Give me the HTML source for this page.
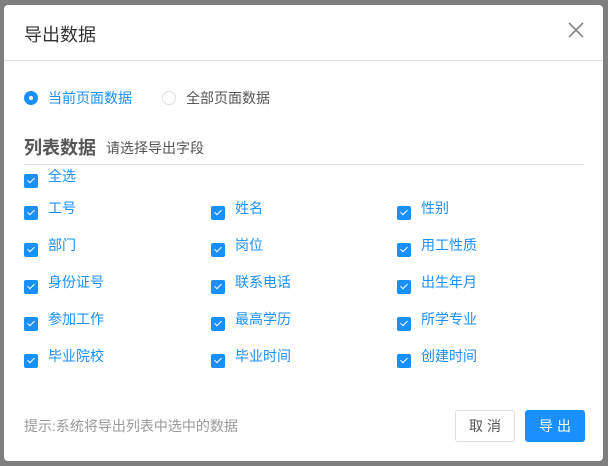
<!DOCTYPE html>
<html><head><meta charset="utf-8"><style>
*{margin:0;padding:0;box-sizing:border-box}
body{width:608px;height:466px;background:#7f7f7f;font-family:"Liberation Sans","Noto Sans CJK SC",sans-serif;position:relative;overflow:hidden}
.m{position:absolute;left:4px;top:5px;width:599px;height:456px;background:#fff;border-radius:4px}
.t{position:absolute;left:20px;top:16px;font-size:18px;color:#333}
.x{position:absolute;left:560px;top:13px;width:24px;height:24px}
.hl{position:absolute;left:0;right:0;top:55px;height:1px;background:#dcdfe6}
.a{position:absolute;font-size:14px;white-space:nowrap;line-height:16px}
.r{position:absolute;width:14px;height:14px;border-radius:50%}
.cb{position:absolute;width:14px;height:14px;background:#1890ff;border-radius:2px}
.cb:after{content:"";position:absolute;left:4.5px;top:2px;width:3px;height:6px;border:solid #fff;border-width:0 1.5px 1.5px 0;transform:rotate(45deg)}
.lb{position:absolute;font-size:14px;color:#1890ff;line-height:16px}
.btn{position:absolute;top:405px;height:32px;width:60px;border-radius:3px;font-size:14px;text-align:center;line-height:30px;letter-spacing:4px;padding-left:4px}
</style></head><body>
<div class="m">
<div class="t">导出数据</div>
<svg class="x" viewBox="0 0 24 24"><path d="M5 5L19 19M19 5L5 19" stroke="#888" stroke-width="1.6"/></svg>
<div class="hl"></div>
<div class="r" style="left:20px;top:86px;background:#1890ff"><div style="position:absolute;left:5px;top:5px;width:4px;height:4px;border-radius:50%;background:#fff"></div></div>
<div class="a" style="left:44px;top:85px;color:#1890ff">当前页面数据</div>
<div class="r" style="left:158px;top:86px;border:1px solid #dcdfe6"></div>
<div class="a" style="left:182px;top:85px;color:#555">全部页面数据</div>
<div class="a" style="left:20px;top:133px;font-size:18px;font-weight:bold;color:#555;line-height:20px">列表数据</div>
<div class="a" style="left:102px;top:135px;color:#555">请选择导出字段</div>
<div style="position:absolute;left:20px;top:159px;width:560px;height:1px;background:#dcdfe6"></div>
<div class="cb" style="left:20px;top:169px"></div><div class="lb" style="left:44px;top:163px">全选</div>

<div class="cb" style="left:20px;top:201px"></div><div class="lb" style="left:44px;top:195px">工号</div>
<div class="cb" style="left:207px;top:201px"></div><div class="lb" style="left:231px;top:195px">姓名</div>
<div class="cb" style="left:393px;top:201px"></div><div class="lb" style="left:417px;top:195px">性别</div>

<div class="cb" style="left:20px;top:238px"></div><div class="lb" style="left:44px;top:232px">部门</div>
<div class="cb" style="left:207px;top:238px"></div><div class="lb" style="left:231px;top:232px">岗位</div>
<div class="cb" style="left:393px;top:238px"></div><div class="lb" style="left:417px;top:232px">用工性质</div>

<div class="cb" style="left:20px;top:275px"></div><div class="lb" style="left:44px;top:269px">身份证号</div>
<div class="cb" style="left:207px;top:275px"></div><div class="lb" style="left:231px;top:269px">联系电话</div>
<div class="cb" style="left:393px;top:275px"></div><div class="lb" style="left:417px;top:269px">出生年月</div>

<div class="cb" style="left:20px;top:312px"></div><div class="lb" style="left:44px;top:306px">参加工作</div>
<div class="cb" style="left:207px;top:312px"></div><div class="lb" style="left:231px;top:306px">最高学历</div>
<div class="cb" style="left:393px;top:312px"></div><div class="lb" style="left:417px;top:306px">所学专业</div>

<div class="cb" style="left:20px;top:349px"></div><div class="lb" style="left:44px;top:343px">毕业院校</div>
<div class="cb" style="left:207px;top:349px"></div><div class="lb" style="left:231px;top:343px">毕业时间</div>
<div class="cb" style="left:393px;top:349px"></div><div class="lb" style="left:417px;top:343px">创建时间</div>

<div class="a" style="left:20px;top:413px;color:#999">提示:系统将导出列表中选中的数据</div>
<div class="btn" style="left:451px;border:1px solid #dcdfe6;color:#555">取消</div>
<div class="btn" style="left:521px;background:#1890ff;color:#fff;border:1px solid #1890ff">导出</div>
</div>
</body></html>
